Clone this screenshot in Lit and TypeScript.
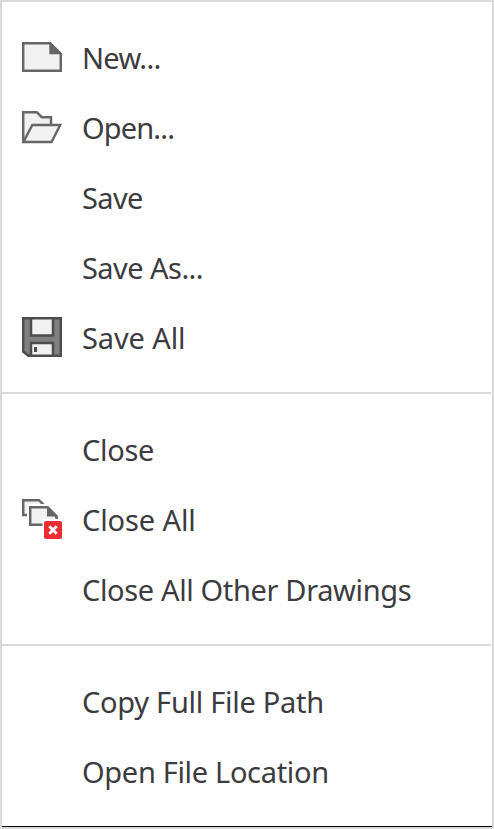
import { LitElement, html, svg, css, nothing } from "lit";
import { customElement } from "lit/decorators.js";
import { styleMap } from "lit/directives/style-map.js";

type Item = { label: string; icon?: string; spacing: number };

const groups: Item[][] = [
  [
    { label: "New...", icon: "new", spacing: -0.7 },
    { label: "Open...", icon: "open", spacing: -0.85 },
    { label: "Save", spacing: -0.6 },
    { label: "Save As...", spacing: -0.55 },
    { label: "Save All", icon: "save", spacing: -0.12 },
  ],
  [
    { label: "Close", spacing: -0.3 },
    { label: "Close All", icon: "close", spacing: -0.1 },
    { label: "Close All Other Drawings", spacing: -0.36 },
  ],
  [
    { label: "Copy Full File Path", spacing: -0.27 },
    { label: "Open File Location", spacing: -0.32 },
  ],
];

const icons: Record<string, unknown> = {
  new: svg`
    <path d="M1.2 6.2H28L38.8 17V33.8H1.2Z" fill="#f1f1f1" stroke="#666" stroke-width="2.5"/>
    <path d="M27.3 5H28.5L40 16.5V17.3H27.3Z" fill="#666"/>`,
  open: svg`
    <path d="M1.2 35V5.2H14.8L19.8 10.2H29V18" fill="#f1f1f1" stroke="#666" stroke-width="2.5"/>
    <path d="M10.3 18H38.2L29.6 35H1.5Z" fill="#f1f1f1" stroke="#666" stroke-width="2.4"/>`,
  save: svg`
    <path d="M1.2 1.2H38.8V38.8H6.5L1.2 34.5Z" fill="#808080" stroke="#4d4d4d" stroke-width="2.5"/>
    <path d="M9 1.2H31V18.6H9Z" fill="#f1f1f1" stroke="#4d4d4d" stroke-width="2.5"/>
    <path d="M9 26H31V38.8H9Z" fill="#f1f1f1" stroke="#4d4d4d" stroke-width="2.5"/>
    <path d="M12 30H15V35H12Z" fill="#4d4d4d"/>`,
  close: svg`
    <path d="M7 16H1.2V1.2H17L21.5 5.7" fill="#f1f1f1" stroke="#666" stroke-width="2.5"/>
    <path d="M5 5H26L37 16V29H5Z" fill="#fff"/>
    <path d="M8.2 8.2H25L34.5 17.5V25.8H8.2Z" fill="#f1f1f1" stroke="#666" stroke-width="2.5"/>
    <path d="M25 7H26.2L36 17V17.5H25Z" fill="#666"/>
    <path d="M20.5 20H40V40H20.5Z" fill="#fff"/>
    <rect x="22" y="22" width="18" height="18" rx="2" fill="#ec2c33"/>
    <path d="M27.3 27.3L34.7 34.7M34.7 27.3L27.3 34.7" stroke="#fff" stroke-width="2.8"/>`,
};

@customElement("app-root")
export class AppRoot extends LitElement {
  static styles = css`
    :host {
      display: block;
    }
    .menu {
      box-sizing: border-box;
      width: 494px;
      height: 829px;
      border: 2px solid #d9d9d9;
      background: #fff;
      color: #3c3c40;
      font: 400 29px/68px "Noto Sans", "Open Sans", sans-serif;
    }
    .group {
      margin-right: 1px;
      padding: 22px 0 18px;
      border-bottom: 2px solid #d9d9d9;
    }
    .group:last-child {
      margin-right: 0;
      border-bottom: 1px solid #000;
    }
    .item {
      display: flex;
      height: 70px;
      padding-left: 20px;
      gap: 20px;
    }
    .icon {
      width: 40px;
      height: 40px;
      margin-top: 13px;
      flex: none;
    }
    .label {
      white-space: nowrap;
    }
  `;

  render() {
    return html`<div class="menu" role="menu">
      ${groups.map(
        (group) => html`<div class="group" role="group">
          ${group.map(
            (item) => html`<div class="item" role="menuitem">
              <svg class="icon" viewBox="0 0 40 40" aria-hidden="true">
                ${item.icon ? icons[item.icon] : nothing}
              </svg>
              <span class="label" style=${styleMap({ letterSpacing: `${item.spacing}px` })}>${item.label}</span>
            </div>`,
          )}
        </div>`,
      )}
    </div>`;
  }
}
